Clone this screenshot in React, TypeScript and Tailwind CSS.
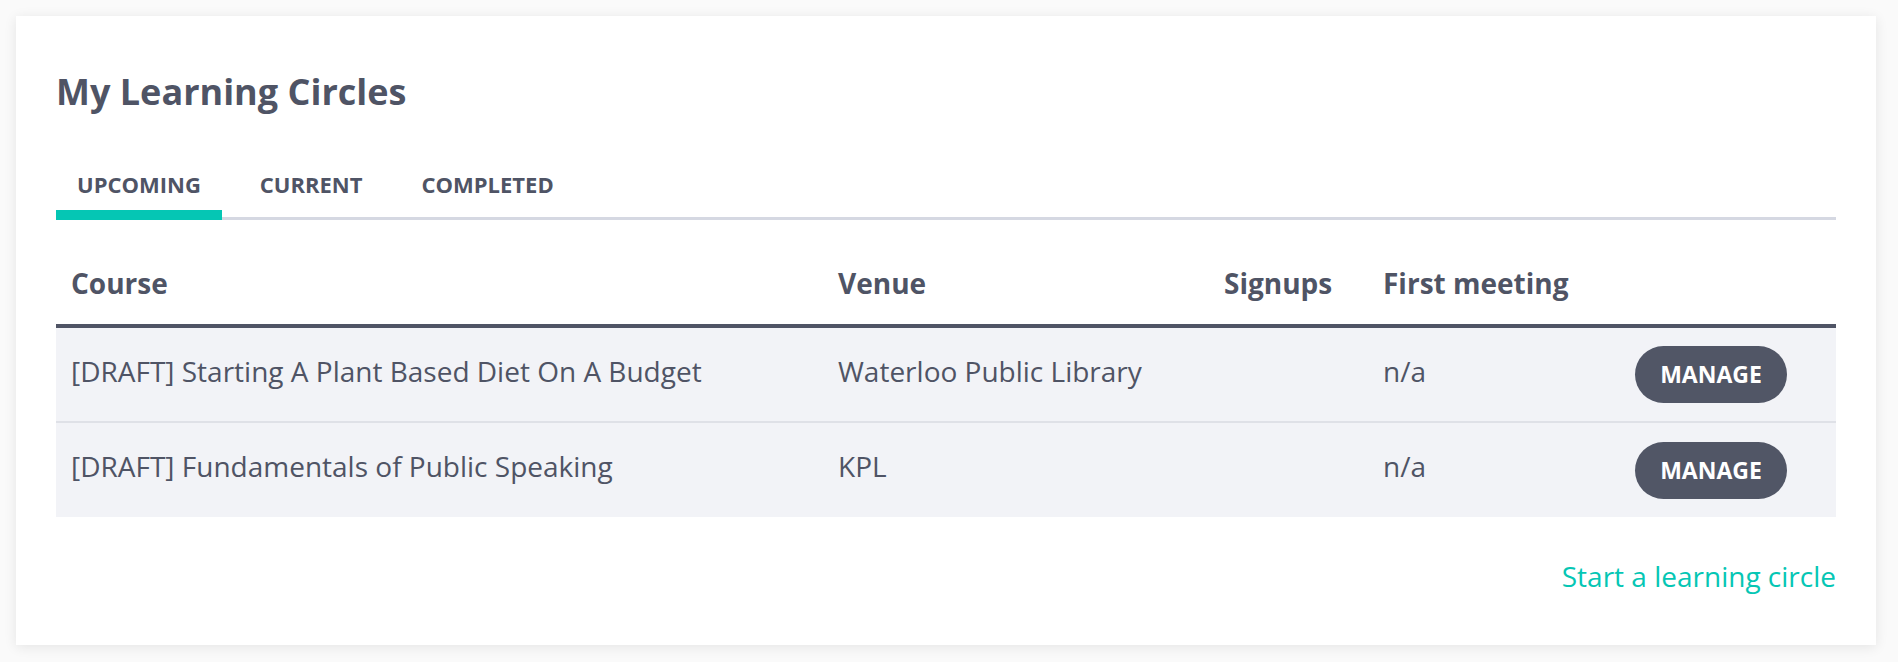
const rows = [
  {
    course: "[DRAFT] Starting A Plant Based Diet On A Budget",
    venue: "Waterloo Public Library",
    signups: "",
    meeting: "n/a",
  },
  {
    course: "[DRAFT] Fundamentals of Public Speaking",
    venue: "KPL",
    signups: "",
    meeting: "n/a",
  },
];

const tabs = ["UPCOMING", "CURRENT", "COMPLETED"];

export default function App() {
  return (
    <div className="min-h-screen bg-[#fafafa] pt-4 pl-4 pr-[22px] pb-[17px] font-['Open_Sans',sans-serif] text-[#4f5465]">
      <div className="bg-white px-10 pt-[58px] pb-[55px] shadow-[0_2px_12px_rgba(0,0,0,0.09)]">
        {/* Title */}
        <h2 className="text-[36px] font-bold leading-none">My Learning Circles</h2>

        {/* Tabs */}
        <div className="mt-[63px] flex border-b-[3px] border-[#d5d8e2]">
          {tabs.map((tab, i) => (
            <div
              key={tab}
              className={
                i === 0
                  ? "-mb-[3px] border-b-[10px] border-[#05c6b4] px-[21px] pb-[15px] text-[22px] font-bold leading-none"
                  : "-mb-[3px] ml-[17px] border-b-[10px] border-transparent px-[21px] pb-[15px] text-[22px] font-bold leading-none"
              }
            >
              {tab}
            </div>
          ))}
        </div>

        {/* Table */}
        <div className="grid grid-cols-[767px_386px_159px_218px_1fr] border-b-4 border-[#4f5465] pt-[49px] pb-[27px] text-[28px] font-bold leading-none">
          <div className="pl-[15px]">Course</div>
          <div className="pl-[15px]">Venue</div>
          <div className="pl-[15px]">Signups</div>
          <div className="pl-[15px]">First meeting</div>
          <div />
        </div>
        {rows.map((row, i) => (
          <div
            key={row.course}
            className={
              i === 0
                ? "grid h-[95px] grid-cols-[767px_386px_159px_218px_1fr] items-center border-b-2 border-[#dfe1e7] bg-[#f2f3f7] text-[28px]"
                : "grid h-[94px] grid-cols-[767px_386px_159px_218px_1fr] items-center bg-[#f2f3f7] text-[28px]"
            }
          >
            <div className="pb-2 pl-[15px] leading-none">{row.course}</div>
            <div className="pb-2 pl-[15px] leading-none">{row.venue}</div>
            <div className="pb-2 pl-[15px] leading-none">{row.signups}</div>
            <div className="pb-2 pl-[15px] leading-none">{row.meeting}</div>
            <div className="flex justify-center">
              <button className="flex h-[57px] w-[152px] items-center justify-center rounded-full bg-[#515666] text-[23px] font-bold leading-none text-white">
                MANAGE
              </button>
            </div>
          </div>
        ))}

        {/* Footer link */}
        <div className="mt-[45px] flex justify-end">
          <a href="#" className="text-[28px] leading-none text-[#05c6b4]">
            Start a learning circle
          </a>
        </div>
      </div>
    </div>
  );
}
